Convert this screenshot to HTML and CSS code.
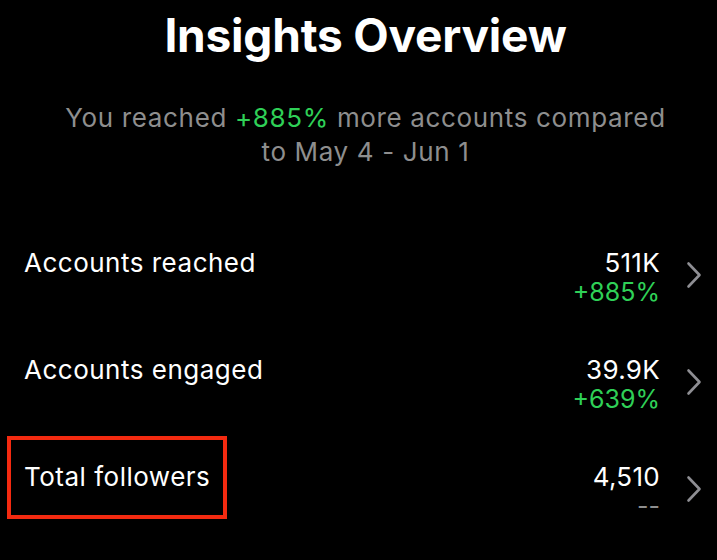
FILE: index.html
```html
<!DOCTYPE html>
<html lang="en">
<head>
<meta charset="utf-8">
<title>Insights Overview</title>
<link rel="stylesheet" href="styles.css">
</head>
<body>
  <main class="overview">
    <header class="overview-head">
      <h1 class="overview-title">Insights Overview</h1>
      <p class="overview-summary">You reached <span class="up">+885%</span> more accounts compared to May 4 - Jun 1</p>
    </header>

    <ul class="metrics">
      <li class="metric">
        <span class="metric-label">Accounts reached</span>
        <span class="metric-values">
          <span class="metric-value">511K</span>
          <span class="metric-delta up">+885%</span>
        </span>
        <svg class="chevron" viewBox="0 0 16 28" aria-hidden="true"><path d="M2.5 2.5 L13.5 14 L2.5 25.5"/></svg>
      </li>
      <li class="metric">
        <span class="metric-label">Accounts engaged</span>
        <span class="metric-values">
          <span class="metric-value">39.9K</span>
          <span class="metric-delta up">+639%</span>
        </span>
        <svg class="chevron" viewBox="0 0 16 28" aria-hidden="true"><path d="M2.5 2.5 L13.5 14 L2.5 25.5"/></svg>
      </li>
      <li class="metric">
        <span class="metric-label is-flagged">Total followers</span>
        <span class="metric-values">
          <span class="metric-value">4,510</span>
          <span class="metric-delta none">--</span>
        </span>
        <svg class="chevron" viewBox="0 0 16 28" aria-hidden="true"><path d="M2.5 2.5 L13.5 14 L2.5 25.5"/></svg>
      </li>
    </ul>
  </main>
</body>
</html>
```

FILE: styles.css
```css
html, body {
  margin: 0;
  padding: 0;
  background: #000;
}

body {
  font-family: Inter, "Noto Sans", "Liberation Sans", sans-serif;
  color: #fff;
  width: 717px;
  height: 560px;
  overflow: hidden;
}

.overview-head {
  display: flex;
  flex-direction: column;
  align-items: center;
  text-align: center;
  padding-left: 14px;
}

.overview-title {
  margin: 6px 0 0;
  font-size: 46px;
  font-weight: 700;
  line-height: 58px;
  letter-spacing: -0.2px;
}

.overview-summary {
  margin: 37px 0 0;
  width: 612px;
  font-size: 26px;
  line-height: 34px;
  letter-spacing: 0.65px;
  color: #8e8e8e;
}

.up {
  color: #2fd057;
}

.metrics {
  list-style: none;
  margin: 79px 0 0;
  padding: 0 0 0 24px;
  display: flex;
  flex-direction: column;
  gap: 38px;
}

.metric {
  display: flex;
  align-items: flex-start;
  height: 69px;
  padding-right: 15px;
}

.metric-label {
  flex: 1;
  font-size: 26px;
  line-height: 30px;
  letter-spacing: 0.5px;
}

/* highlighted row label gets a red frame around it */
.metric-label.is-flagged {
  flex: 0 0 auto;
  margin: -26px auto 0 -17px;
  padding: 22px 13px 23px;
  border: 4px solid #f42a10;
}

.metric-values {
  display: flex;
  flex-direction: column;
  align-items: flex-end;
  margin-right: 26px;
}

.metric-value {
  font-size: 26px;
  line-height: 30px;
  letter-spacing: 0.3px;
}

.metric-delta {
  font-size: 25px;
  line-height: 29px;
}

.metric-delta.none {
  color: #8e8e8e;
}

.chevron {
  margin-top: 13px;
  width: 16px;
  height: 28px;
  fill: none;
  stroke: #8e8e93;
  stroke-width: 2.6;
  stroke-linecap: round;
  stroke-linejoin: round;
}
```
